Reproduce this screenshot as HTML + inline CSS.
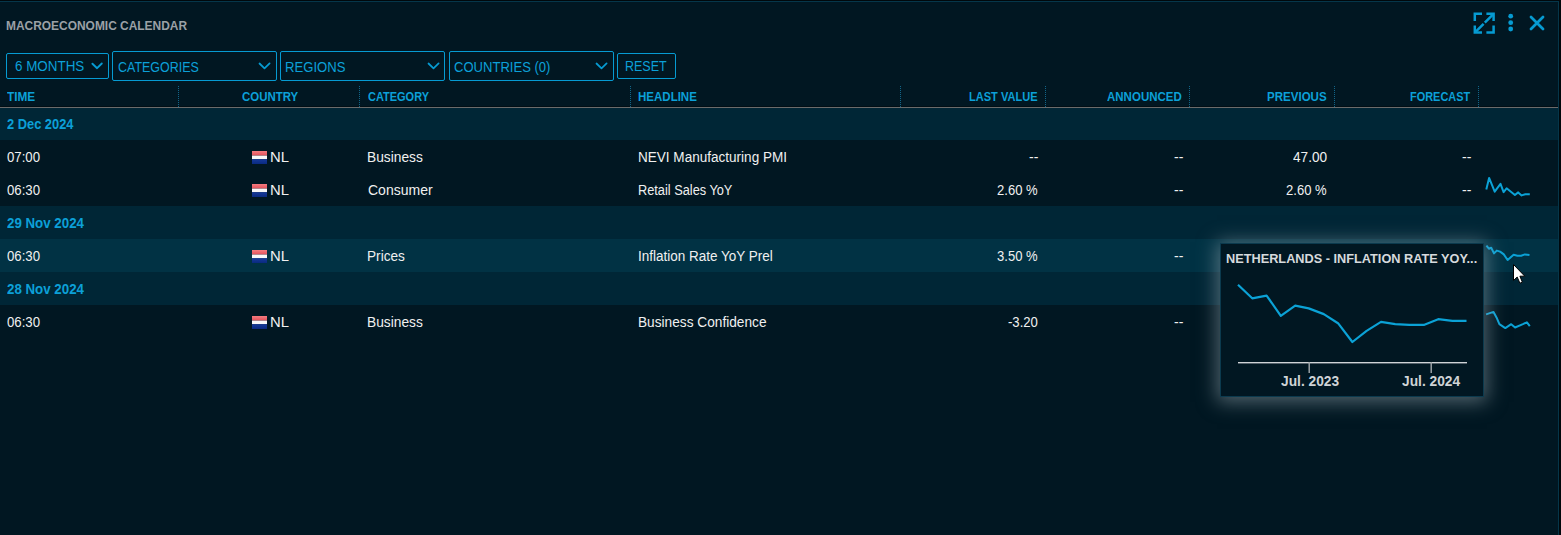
<!DOCTYPE html>
<html><head><meta charset="utf-8">
<style>
html,body{margin:0;padding:0;width:1561px;height:535px;overflow:hidden;background:#00080c;}
body{font-family:"Liberation Sans",sans-serif;position:relative;}
.t{position:absolute;white-space:nowrap;transform-origin:0 0;}
.panel{position:absolute;left:0;top:1px;width:1559px;height:534px;background:#011722;border-top:1px solid #05364a;border-right:1px solid #05364a;box-sizing:border-box;}
.box{position:absolute;border:1px solid #069bd2;border-radius:2px;box-sizing:border-box;}
.sep{position:absolute;top:86px;height:21px;width:1px;background:repeating-linear-gradient(to bottom,#11668a 0,#11668a 1px,transparent 1px,transparent 2px);}
.bg{position:absolute;left:0;width:1558px;height:33px;}
.flag{position:absolute;left:252px;width:15px;height:12px;}
svg{position:absolute;overflow:visible;}
</style></head><body>
<div class="panel"></div>

<div class="bg" style="top:107px;background:#002636"></div>
<div class="bg" style="top:206px;background:#002636"></div>
<div class="bg" style="top:239px;background:#013244"></div>
<div class="bg" style="top:272px;background:#002636"></div>
<div style="position:absolute;left:0;top:106px;width:1558px;height:1px;background:#000e15"></div>
<div style="position:absolute;left:0;top:107px;width:1558px;height:1px;background:#6b6b6b"></div>
<div class="sep" style="left:178px"></div>
<div class="sep" style="left:359px"></div>
<div class="sep" style="left:630px"></div>
<div class="sep" style="left:900px"></div>
<div class="sep" style="left:1045px"></div>
<div class="sep" style="left:1189px"></div>
<div class="sep" style="left:1334px"></div>
<div class="sep" style="left:1478px"></div>
<div class="box" style="left:6px;top:53px;width:103px;height:26px"></div>
<div class="box" style="left:112px;top:51px;width:165px;height:30px"></div>
<div class="box" style="left:280px;top:51px;width:165px;height:30px"></div>
<div class="box" style="left:449px;top:51px;width:165px;height:30px"></div>
<div class="box" style="left:617px;top:53px;width:59px;height:26px"></div>
<svg style="left:92px;top:62px" width="12" height="9" viewBox="0 0 12 9"><path d="M0.4 1.7 L5.1 6.2 L9.8 1.5" fill="none" stroke="#069bd2" stroke-width="1.9" stroke-linecap="round" stroke-linejoin="round"/></svg>
<svg style="left:259px;top:62px" width="13" height="9" viewBox="0 0 13 9"><path d="M0.5 1.5 L5.5 6.3 L10.6 1.4" fill="none" stroke="#069bd2" stroke-width="1.75" stroke-linecap="round" stroke-linejoin="round"/></svg>
<svg style="left:428px;top:62px" width="13" height="9" viewBox="0 0 13 9"><path d="M0.5 1.5 L5.5 6.3 L10.6 1.4" fill="none" stroke="#069bd2" stroke-width="1.75" stroke-linecap="round" stroke-linejoin="round"/></svg>
<svg style="left:596px;top:62px" width="13" height="9" viewBox="0 0 13 9"><path d="M0.5 1.5 L5.5 6.3 L10.6 1.4" fill="none" stroke="#069bd2" stroke-width="1.75" stroke-linecap="round" stroke-linejoin="round"/></svg>
<svg style="left:1470px;top:9px" width="30" height="30" viewBox="0 0 30 30">
<g fill="none" stroke="#069bd2" stroke-width="2.5">
<path d="M4.8 12 V4.8 H12"/><path d="M16.4 4.8 H23.6 V12"/>
<path d="M23.6 16.4 V23.6 H16.4"/><path d="M12 23.6 H4.8 V16.4"/>
<path d="M5.8 22.6 L13.6 14.8 M14.8 13.6 L22.6 5.8"/>
</g></svg>
<svg style="left:1500px;top:9px" width="25" height="30" viewBox="0 0 25 30">
<g fill="#069bd2"><circle cx="10.7" cy="7.2" r="2.4"/><circle cx="10.7" cy="13.7" r="2.4"/><circle cx="10.7" cy="20" r="2.4"/></g></svg>
<svg style="left:1525px;top:10px" width="25" height="25" viewBox="0 0 25 25">
<path d="M6 7 L18 19 M18 7 L6 19" fill="none" stroke="#069bd2" stroke-width="2.8" stroke-linecap="round"/></svg>
<svg width="0" height="0" style="position:absolute"><defs><linearGradient id="fr" x1="0" y1="0" x2="0" y2="1"><stop offset="0" stop-color="#f47c80"/><stop offset="1" stop-color="#e2505a"/></linearGradient><linearGradient id="fb" x1="0" y1="0" x2="0" y2="1"><stop offset="0" stop-color="#163a9a"/><stop offset="1" stop-color="#0a2a80"/></linearGradient></defs></svg>
<svg style="left:252px;top:151px" width="15" height="13" viewBox="0 0 15 13"><rect x="0" y="0" width="15" height="4.6" fill="url(#fr)"/><rect x="0" y="4.6" width="15" height="3.6" fill="#f8f8f8"/><rect x="0" y="8.2" width="15" height="4.8" fill="url(#fb)"/></svg>
<svg style="left:252px;top:184px" width="15" height="13" viewBox="0 0 15 13"><rect x="0" y="0" width="15" height="4.6" fill="url(#fr)"/><rect x="0" y="4.6" width="15" height="3.6" fill="#f8f8f8"/><rect x="0" y="8.2" width="15" height="4.8" fill="url(#fb)"/></svg>
<svg style="left:252px;top:250px" width="15" height="13" viewBox="0 0 15 13"><rect x="0" y="0" width="15" height="4.6" fill="url(#fr)"/><rect x="0" y="4.6" width="15" height="3.6" fill="#f8f8f8"/><rect x="0" y="8.2" width="15" height="4.8" fill="url(#fb)"/></svg>
<svg style="left:252px;top:316px" width="15" height="13" viewBox="0 0 15 13"><rect x="0" y="0" width="15" height="4.6" fill="url(#fr)"/><rect x="0" y="4.6" width="15" height="3.6" fill="#f8f8f8"/><rect x="0" y="8.2" width="15" height="4.8" fill="url(#fb)"/></svg>
<svg style="left:0;top:0" width="1561" height="535"><g fill="none" stroke="#0ba2d6" stroke-width="2" stroke-linejoin="round">
<polyline points="1486.3,189.6 1489.1,177.9 1494.7,191.7 1500.5,183.8 1503.6,192.1 1506.6,188.3 1514.9,195.0 1518.2,192.4 1521.6,195.4 1525.3,194.3 1529.8,194.3"/>
<polyline points="1486.4,245.7 1488.9,248.7 1491.2,247.8 1494.0,253.4 1496.8,250.6 1500.1,251.6 1503.8,254.4 1507.6,260.0 1513.6,254.8 1517.4,255.8 1521.1,255.8 1524.9,254.4 1529.5,254.9"/>
<polyline points="1486.1,314.4 1493.5,311.9 1496.5,317.4 1499.4,324.2 1505.3,328.1 1511.2,324.2 1515.1,327.5 1522.9,324.2 1526.9,322.3 1529.8,326.2"/>
</g></svg>
<div class="t" style="left:6.08px;top:19px;font-size:13px;font-weight:700;line-height:13px;color:#9ba1a6;transform:scaleX(0.9184)">MACROECONOMIC CALENDAR</div>
<div class="t" style="left:15.00px;top:59px;font-size:14px;font-weight:400;line-height:14px;color:#0ca0d8;transform:scaleX(0.9583)">6 MONTHS</div>
<div class="t" style="left:118.00px;top:60px;font-size:14px;font-weight:400;line-height:14px;color:#0ca0d8;transform:scaleX(0.8901)">CATEGORIES</div>
<div class="t" style="left:285.06px;top:60px;font-size:14px;font-weight:400;line-height:14px;color:#0ca0d8;transform:scaleX(0.9365)">REGIONS</div>
<div class="t" style="left:454.00px;top:60px;font-size:14px;font-weight:400;line-height:14px;color:#0ca0d8;transform:scaleX(0.9320)">COUNTRIES (0)</div>
<div class="t" style="left:625.11px;top:59px;font-size:14px;font-weight:400;line-height:14px;color:#0ca0d8;transform:scaleX(0.8913)">RESET</div>
<div class="t" style="left:7.00px;top:90px;font-size:13.5px;font-weight:700;line-height:13.5px;color:#0ca0d8;transform:scaleX(0.8750)">TIME</div>
<div class="t" style="left:242.00px;top:90px;font-size:13.5px;font-weight:700;line-height:13.5px;color:#0ca0d8;transform:scaleX(0.8485)">COUNTRY</div>
<div class="t" style="left:368.00px;top:90px;font-size:13.5px;font-weight:700;line-height:13.5px;color:#0ca0d8;transform:scaleX(0.8133)">CATEGORY</div>
<div class="t" style="left:638.15px;top:90px;font-size:13.5px;font-weight:700;line-height:13.5px;color:#0ca0d8;transform:scaleX(0.8529)">HEADLINE</div>
<div class="t" style="left:969.18px;top:90px;font-size:13.5px;font-weight:700;line-height:13.5px;color:#0ca0d8;transform:scaleX(0.8193)">LAST VALUE</div>
<div class="t" style="left:1107.00px;top:90px;font-size:13.5px;font-weight:700;line-height:13.5px;color:#0ca0d8;transform:scaleX(0.8523)">ANNOUNCED</div>
<div class="t" style="left:1267.14px;top:90px;font-size:13.5px;font-weight:700;line-height:13.5px;color:#0ca0d8;transform:scaleX(0.8551)">PREVIOUS</div>
<div class="t" style="left:1410.19px;top:90px;font-size:13.5px;font-weight:700;line-height:13.5px;color:#0ca0d8;transform:scaleX(0.8108)">FORECAST</div>
<div class="t" style="left:7.00px;top:117px;font-size:14px;font-weight:700;line-height:14px;color:#0ca0d8;transform:scaleX(0.9178)">2 Dec 2024</div>
<div class="t" style="left:7.00px;top:216px;font-size:14px;font-weight:700;line-height:14px;color:#0ca0d8;transform:scaleX(0.9506)">29 Nov 2024</div>
<div class="t" style="left:7.00px;top:282px;font-size:14px;font-weight:700;line-height:14px;color:#0ca0d8;transform:scaleX(0.9506)">28 Nov 2024</div>
<div class="t" style="left:7.00px;top:150px;font-size:14px;font-weight:400;line-height:14px;color:#f0f0f0;transform:scaleX(0.9429)">07:00</div>
<div class="t" style="left:367.02px;top:150px;font-size:14px;font-weight:400;line-height:14px;color:#f0f0f0;transform:scaleX(0.9821)">Business</div>
<div class="t" style="left:638.03px;top:150px;font-size:14px;font-weight:400;line-height:14px;color:#f0f0f0;transform:scaleX(0.9671)">NEVI Manufacturing PMI</div>
<div class="t" style="left:1029.00px;top:150px;font-size:14px;font-weight:400;line-height:14px;color:#f0f0f0;transform:scaleX(1.0000)">--</div>
<div class="t" style="left:1174.00px;top:150px;font-size:14px;font-weight:400;line-height:14px;color:#f0f0f0;transform:scaleX(1.0000)">--</div>
<div class="t" style="left:1293.00px;top:150px;font-size:14px;font-weight:400;line-height:14px;color:#f0f0f0;transform:scaleX(0.9714)">47.00</div>
<div class="t" style="left:1462.00px;top:150px;font-size:14px;font-weight:400;line-height:14px;color:#f0f0f0;transform:scaleX(1.0000)">--</div>
<div class="t" style="left:269.94px;top:150px;font-size:14px;font-weight:400;line-height:14px;color:#f0f0f0;transform:scaleX(1.0588)">NL</div>
<div class="t" style="left:7.00px;top:183px;font-size:14px;font-weight:400;line-height:14px;color:#f0f0f0;transform:scaleX(0.9429)">06:30</div>
<div class="t" style="left:368.00px;top:183px;font-size:14px;font-weight:400;line-height:14px;color:#f0f0f0;transform:scaleX(1.0000)">Consumer</div>
<div class="t" style="left:638.09px;top:183px;font-size:14px;font-weight:400;line-height:14px;color:#f0f0f0;transform:scaleX(0.9118)">Retail Sales YoY</div>
<div class="t" style="left:997.00px;top:183px;font-size:14px;font-weight:400;line-height:14px;color:#f0f0f0;transform:scaleX(0.9318)">2.60 %</div>
<div class="t" style="left:1174.00px;top:183px;font-size:14px;font-weight:400;line-height:14px;color:#f0f0f0;transform:scaleX(1.0000)">--</div>
<div class="t" style="left:1286.00px;top:183px;font-size:14px;font-weight:400;line-height:14px;color:#f0f0f0;transform:scaleX(0.9318)">2.60 %</div>
<div class="t" style="left:1462.00px;top:183px;font-size:14px;font-weight:400;line-height:14px;color:#f0f0f0;transform:scaleX(1.0000)">--</div>
<div class="t" style="left:269.94px;top:183px;font-size:14px;font-weight:400;line-height:14px;color:#f0f0f0;transform:scaleX(1.0588)">NL</div>
<div class="t" style="left:7.00px;top:249px;font-size:14px;font-weight:400;line-height:14px;color:#f0f0f0;transform:scaleX(0.9429)">06:30</div>
<div class="t" style="left:367.03px;top:249px;font-size:14px;font-weight:400;line-height:14px;color:#f0f0f0;transform:scaleX(0.9737)">Prices</div>
<div class="t" style="left:638.04px;top:249px;font-size:14px;font-weight:400;line-height:14px;color:#f0f0f0;transform:scaleX(0.9638)">Inflation Rate YoY Prel</div>
<div class="t" style="left:997.00px;top:249px;font-size:14px;font-weight:400;line-height:14px;color:#f0f0f0;transform:scaleX(0.9318)">3.50 %</div>
<div class="t" style="left:1174.00px;top:249px;font-size:14px;font-weight:400;line-height:14px;color:#f0f0f0;transform:scaleX(1.0000)">--</div>
<div class="t" style="left:269.94px;top:249px;font-size:14px;font-weight:400;line-height:14px;color:#f0f0f0;transform:scaleX(1.0588)">NL</div>
<div class="t" style="left:7.00px;top:315px;font-size:14px;font-weight:400;line-height:14px;color:#f0f0f0;transform:scaleX(0.9429)">06:30</div>
<div class="t" style="left:367.02px;top:315px;font-size:14px;font-weight:400;line-height:14px;color:#f0f0f0;transform:scaleX(0.9821)">Business</div>
<div class="t" style="left:638.02px;top:315px;font-size:14px;font-weight:400;line-height:14px;color:#f0f0f0;transform:scaleX(0.9769)">Business Confidence</div>
<div class="t" style="left:1008.00px;top:315px;font-size:14px;font-weight:400;line-height:14px;color:#f0f0f0;transform:scaleX(0.9375)">-3.20</div>
<div class="t" style="left:1174.00px;top:315px;font-size:14px;font-weight:400;line-height:14px;color:#f0f0f0;transform:scaleX(1.0000)">--</div>
<div class="t" style="left:269.94px;top:315px;font-size:14px;font-weight:400;line-height:14px;color:#f0f0f0;transform:scaleX(1.0588)">NL</div>
<div style="position:absolute;left:1220px;top:243px;width:264px;height:154px;background:#011722;border:1px solid #0b3a4e;box-sizing:border-box;box-shadow:0 2px 18px 3px rgba(160,176,183,0.5)"></div>
<svg style="left:0;top:0" width="1561" height="535">
<polyline points="1238.0,284.8 1252.2,298.3 1266.6,295.6 1280.8,315.8 1295.2,305.7 1308.7,308.4 1323.8,314.1 1338.0,323.2 1352.4,342.0 1366.6,330.9 1381.0,321.9 1395.2,324.2 1409.3,324.9 1423.8,324.9 1438.2,319.2 1452.4,320.8 1466.5,320.8" fill="none" stroke="#0ba2d6" stroke-width="2.2" stroke-linejoin="round"/>
<rect x="1238" y="362" width="229" height="1.4" fill="#cfd3d6"/>
<rect x="1308.5" y="362" width="1.4" height="11" fill="#a4a9ad"/>
<rect x="1430.5" y="362" width="1.4" height="11" fill="#a4a9ad"/>
</svg>
<div class="t" style="left:1226.06px;top:252px;font-size:13.5px;font-weight:700;line-height:13.5px;color:#d6dadd;transform:scaleX(0.9434)">NETHERLANDS - INFLATION RATE YOY...</div>
<div class="t" style="left:1281.00px;top:374px;font-size:14px;font-weight:700;line-height:14px;color:#cfd3d6;transform:scaleX(0.9831)">Jul. 2023</div>
<div class="t" style="left:1402.00px;top:374px;font-size:14px;font-weight:700;line-height:14px;color:#cfd3d6;transform:scaleX(0.9831)">Jul. 2024</div>
<svg style="left:1513px;top:264px" width="14" height="22" viewBox="0 0 14 22">
<path d="M0.5 0.5 L0.5 16.5 L4.2 13 L6.9 19.2 L9.4 18.2 L6.9 12.2 L11.8 12.2 Z" fill="#ffffff" stroke="#000" stroke-width="1"/></svg>
</body></html>
